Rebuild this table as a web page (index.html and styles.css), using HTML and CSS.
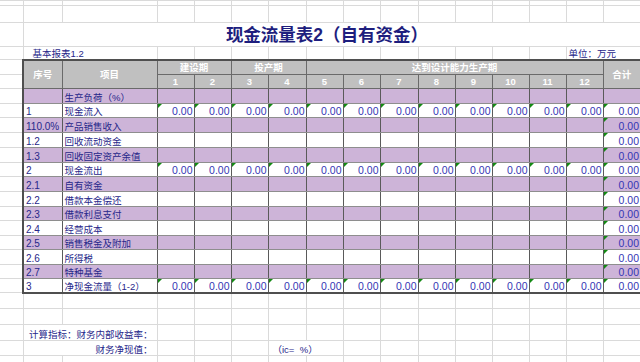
FILE: index.html
```html
<!DOCTYPE html>
<html lang="zh-CN">
<head>
<meta charset="utf-8">
<title>现金流量表2（自有资金）</title>
<link rel="stylesheet" href="styles.css">
</head>
<body>
<table class="sheet">
<colgroup>
<col class="w-a"><col class="w-no"><col class="w-item">
<col class="w-n"><col class="w-n"><col class="w-n"><col class="w-n2"><col class="w-n"><col class="w-n"><col class="w-n2"><col class="w-n"><col class="w-n"><col class="w-n"><col class="w-n"><col class="w-n">
<col class="w-tot">
</colgroup>
<tbody>
<tr class="r5"><td></td><td></td><td></td><td></td><td></td><td></td><td></td><td></td><td></td><td></td><td></td><td></td><td></td><td></td><td></td><td></td></tr>
<tr class="r17"><td></td><td></td><td></td><td></td><td></td><td></td><td></td><td></td><td></td><td></td><td></td><td></td><td></td><td></td><td></td><td></td></tr>
<tr class="r24"><td></td><td class="title" colspan="15">现金流量表2（自有资金）</td></tr>
<tr class="r13"><td></td><td class="sub" colspan="2">基本报表1.2</td><td></td><td></td><td></td><td></td><td></td><td></td><td></td><td></td><td></td><td></td><td></td><td class="unit" colspan="2">单位：万元</td></tr>
<tr class="r15 h1"><td></td><td class="t hd no" rowspan="2">序号</td><td class="t hd" rowspan="2">项目</td><td class="t hd" colspan="2">建设期</td><td class="t hd" colspan="2">投产期</td><td class="t hd" colspan="8">达到设计能力生产期</td><td class="t hd tot" rowspan="2">合计</td></tr>
<tr class="r14 h2"><td></td><td class="t hd">1</td><td class="t hd">2</td><td class="t hd">3</td><td class="t hd">4</td><td class="t hd">5</td><td class="t hd">6</td><td class="t hd">7</td><td class="t hd">8</td><td class="t hd">9</td><td class="t hd">10</td><td class="t hd">11</td><td class="t hd">12</td></tr>

<tr class="r15 pu"><td></td><td class="t no"></td><td class="t lb">生产负荷（%）</td><td class="t"></td><td class="t"></td><td class="t"></td><td class="t"></td><td class="t"></td><td class="t"></td><td class="t"></td><td class="t"></td><td class="t"></td><td class="t"></td><td class="t"></td><td class="t"></td><td class="t tot"></td></tr>
<tr class="r14"><td></td><td class="t no">1</td><td class="t lb">现金流入</td><td class="t n k">0.00</td><td class="t n k">0.00</td><td class="t n k">0.00</td><td class="t n k">0.00</td><td class="t n k">0.00</td><td class="t n k">0.00</td><td class="t n k">0.00</td><td class="t n k">0.00</td><td class="t n k">0.00</td><td class="t n k">0.00</td><td class="t n k">0.00</td><td class="t n k">0.00</td><td class="t n k tot">0.00</td></tr>
<tr class="r15 pu"><td></td><td class="t no">110.0%</td><td class="t lb">产品销售收入</td><td class="t"></td><td class="t"></td><td class="t"></td><td class="t"></td><td class="t"></td><td class="t"></td><td class="t"></td><td class="t"></td><td class="t"></td><td class="t"></td><td class="t"></td><td class="t"></td><td class="t n k tot">0.00</td></tr>
<tr class="r15"><td></td><td class="t no">1.2</td><td class="t lb">回收流动资金</td><td class="t"></td><td class="t"></td><td class="t"></td><td class="t"></td><td class="t"></td><td class="t"></td><td class="t"></td><td class="t"></td><td class="t"></td><td class="t"></td><td class="t"></td><td class="t"></td><td class="t n k tot">0.00</td></tr>
<tr class="r15 pu"><td></td><td class="t no">1.3</td><td class="t lb">回收固定资产余值</td><td class="t"></td><td class="t"></td><td class="t"></td><td class="t"></td><td class="t"></td><td class="t"></td><td class="t"></td><td class="t"></td><td class="t"></td><td class="t"></td><td class="t"></td><td class="t"></td><td class="t n k tot">0.00</td></tr>
<tr class="r14"><td></td><td class="t no">2</td><td class="t lb">现金流出</td><td class="t n k">0.00</td><td class="t n k">0.00</td><td class="t n k">0.00</td><td class="t n k">0.00</td><td class="t n k">0.00</td><td class="t n k">0.00</td><td class="t n k">0.00</td><td class="t n k">0.00</td><td class="t n k">0.00</td><td class="t n k">0.00</td><td class="t n k">0.00</td><td class="t n k">0.00</td><td class="t n k tot">0.00</td></tr>
<tr class="r15 pu"><td></td><td class="t no">2.1</td><td class="t lb">自有资金</td><td class="t"></td><td class="t"></td><td class="t"></td><td class="t"></td><td class="t"></td><td class="t"></td><td class="t"></td><td class="t"></td><td class="t"></td><td class="t"></td><td class="t"></td><td class="t"></td><td class="t n k tot">0.00</td></tr>
<tr class="r15"><td></td><td class="t no">2.2</td><td class="t lb">借款本金偿还</td><td class="t"></td><td class="t"></td><td class="t"></td><td class="t"></td><td class="t"></td><td class="t"></td><td class="t"></td><td class="t"></td><td class="t"></td><td class="t"></td><td class="t"></td><td class="t"></td><td class="t n k tot">0.00</td></tr>
<tr class="r14 pu"><td></td><td class="t no">2.3</td><td class="t lb">借款利息支付</td><td class="t"></td><td class="t"></td><td class="t"></td><td class="t"></td><td class="t"></td><td class="t"></td><td class="t"></td><td class="t"></td><td class="t"></td><td class="t"></td><td class="t"></td><td class="t"></td><td class="t n k tot">0.00</td></tr>
<tr class="r15"><td></td><td class="t no">2.4</td><td class="t lb">经营成本</td><td class="t"></td><td class="t"></td><td class="t"></td><td class="t"></td><td class="t"></td><td class="t"></td><td class="t"></td><td class="t"></td><td class="t"></td><td class="t"></td><td class="t"></td><td class="t"></td><td class="t n k tot">0.00</td></tr>
<tr class="r14 pu"><td></td><td class="t no">2.5</td><td class="t lb">销售税金及附加</td><td class="t"></td><td class="t"></td><td class="t"></td><td class="t"></td><td class="t"></td><td class="t"></td><td class="t"></td><td class="t"></td><td class="t"></td><td class="t"></td><td class="t"></td><td class="t"></td><td class="t n k tot">0.00</td></tr>
<tr class="r15"><td></td><td class="t no">2.6</td><td class="t lb">所得税</td><td class="t"></td><td class="t"></td><td class="t"></td><td class="t"></td><td class="t"></td><td class="t"></td><td class="t"></td><td class="t"></td><td class="t"></td><td class="t"></td><td class="t"></td><td class="t"></td><td class="t n k tot">0.00</td></tr>
<tr class="r14 pu"><td></td><td class="t no">2.7</td><td class="t lb">特种基金</td><td class="t"></td><td class="t"></td><td class="t"></td><td class="t"></td><td class="t"></td><td class="t"></td><td class="t"></td><td class="t"></td><td class="t"></td><td class="t"></td><td class="t"></td><td class="t"></td><td class="t n k tot">0.00</td></tr>
<tr class="r14 last"><td></td><td class="t no">3</td><td class="t lb">净现金流量（1-2）</td><td class="t n k">0.00</td><td class="t n k">0.00</td><td class="t n k">0.00</td><td class="t n k">0.00</td><td class="t n k">0.00</td><td class="t n k">0.00</td><td class="t n k">0.00</td><td class="t n k">0.00</td><td class="t n k">0.00</td><td class="t n k">0.00</td><td class="t n k">0.00</td><td class="t n k">0.00</td><td class="t n k tot">0.00</td></tr>

<tr class="r16"><td></td><td></td><td></td><td></td><td></td><td></td><td></td><td></td><td></td><td></td><td></td><td></td><td></td><td></td><td></td><td></td></tr>
<tr class="r16"><td></td><td></td><td></td><td></td><td></td><td></td><td></td><td></td><td></td><td></td><td></td><td></td><td></td><td></td><td></td><td></td></tr>
<tr class="r16"><td></td><td class="note" colspan="2">计算指标：财务内部收益率：</td><td></td><td></td><td></td><td></td><td></td><td></td><td></td><td></td><td></td><td></td><td></td><td></td><td></td></tr>
<tr class="r15"><td></td><td class="note" colspan="2">财务净现值：</td><td></td><td></td><td></td><td class="ic" colspan="2">（ic=&nbsp;&nbsp;%）</td><td></td><td></td><td></td><td></td><td></td><td></td><td></td><td></td></tr>
<tr class="r16"><td></td><td></td><td></td><td></td><td></td><td></td><td></td><td></td><td></td><td></td><td></td><td></td><td></td><td></td><td></td><td></td></tr>
</tbody>
</table>
</body>
</html>
```
FILE: styles.css
```css
html, body {
  margin: 0;
  padding: 0;
  background: #ffffff;
  overflow: hidden;
}
body {
  width: 640px;
  height: 362px;
  font-family: "Liberation Sans", "Noto Sans CJK SC", sans-serif;
}
.sheet {
  border-collapse: collapse;
  table-layout: fixed;
  width: 641px;
  font-size: 9.5px;
  line-height: 11px;
  color: #27278a;
}
.w-a { width: 23px; }
.w-no { width: 39px; }
.w-item { width: 95px; }
.w-n { width: 37px; }
.w-n2 { width: 38px; }
.w-tot { width: 38px; }

.r5 { height: 5px; }
.r13 { height: 13px; }
.r14 { height: 14px; }
.r15 { height: 15px; }
.r16 { height: 16px; }
.r17 { height: 17px; }
.r24 { height: 24px; }

.sheet td {
  border: 1px solid #dadada;
  padding: 0 2px;
  white-space: nowrap;
  overflow: visible;
  vertical-align: bottom;
}
.sheet td:first-child {
  border-left: none;
}
.sheet td.title {
  font-size: 17.5px;
  line-height: 20px;
  font-weight: bold;
  color: #1e1e7e;
  text-align: center;
  padding-right: 12px;
  vertical-align: middle;
}
.sheet td.sub {
  padding-left: 9px;
}
.sheet td.t {
  border-color: #8e8e8e #5a5a5a;
}
.sheet td.no {
  font-size: 10px;
}
.sheet td.hd {
  background: #c0c0c0;
  color: #ffffff;
  font-size: 9.5px;
  font-weight: bold;
  text-align: center;
  vertical-align: middle;
  border-color: #6a6a6a;
}
.sheet tr.h1 td.t {
  border-top: 2px solid #4f4f4f;
}
.sheet td.no {
  border-left: 2px solid #4f4f4f;
}
.sheet td.tot {
  border-right: 2px solid #4f4f4f;
}
.sheet tr.last td.t {
  border-bottom: 2px solid #4f4f4f;
}
.sheet tr.pu td.t {
  background: #cdb4d8;
}
.sheet td.n {
  text-align: right;
  padding-right: 1px;
  font-size: 10.5px;
  color: #3434b4;
  position: relative;
}
.sheet td.k::before {
  content: "";
  position: absolute;
  left: 0;
  top: 0;
  border-top: 4px solid #138a13;
  border-right: 4px solid transparent;
}
.sheet td.note {
  text-align: right;
  padding-right: 4px;
}
.sheet td.ic {
  padding-left: 4px;
}
```
